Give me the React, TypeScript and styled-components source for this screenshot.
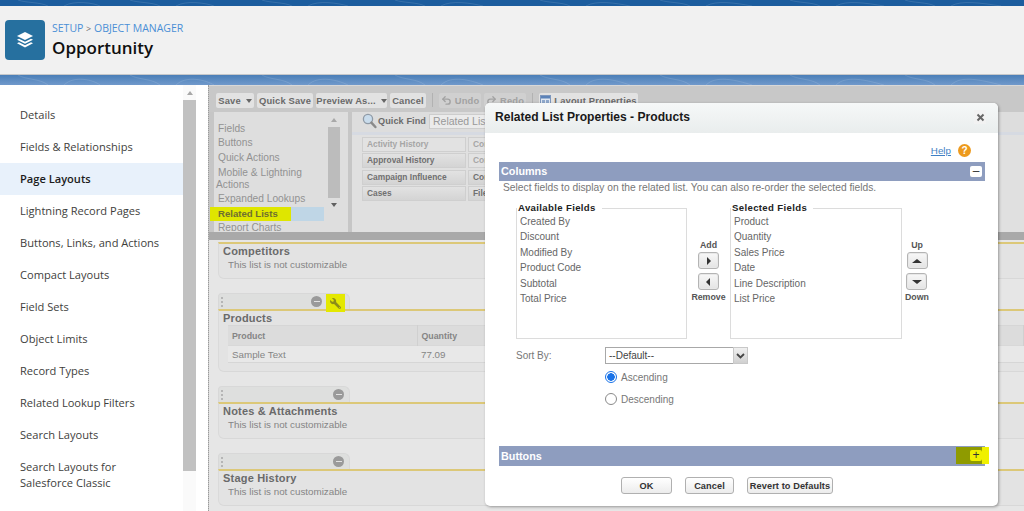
import React from "react";
import styled, { createGlobalStyle } from "styled-components";
import { Undo2, Redo2 } from "lucide-react";
import { FaWrench } from "react-icons/fa";

const GlobalStyle = createGlobalStyle`
  html, body {
    margin: 0;
    padding: 0;
    background: #fff;
  }
  * {
    box-sizing: border-box;
  }
`;

const classic = `"Liberation Sans", Arial, sans-serif`;

const Page = styled.div`
  position: relative;
  width: 1024px;
  height: 511px;
  overflow: hidden;
  display: flex;
  flex-direction: column;
  font-family: ${classic};
`;

const TopBand = styled.div`
  position: relative;
  height: 6px;
  flex: none;
  overflow: hidden;
  background: #1c5d9e;
`;

const Header = styled.header`
  height: 69px;
  flex: none;
  display: flex;
  align-items: center;
  gap: 7px;
  padding: 0 0 1px 5px;
  background: #f1f1f1;
  border-bottom: 1px solid #c6c8ca;
`;

const LogoBox = styled.div`
  width: 40px;
  height: 40px;
  border-radius: 4px;
  background: #26709f;
  display: flex;
  align-items: center;
  justify-content: center;
`;

const HeaderText = styled.div`
  margin-top: -2px;
`;

const Crumbs = styled.div`
  font-family: "Open Sans", sans-serif;
  font-size: 10.5px;
  line-height: 14px;
  color: #4a8fd6;
  margin: 2px 0 1px;

  span {
    color: #6d6d6d;
    font-size: 9px;
  }
`;

const PageTitle = styled.h1`
  margin: 0;
  font-family: "Open Sans", sans-serif;
  font-weight: 600;
  font-size: 17px;
  line-height: 21px;
  color: #0f0f0f;
`;

const Strip = styled.div`
  position: relative;
  height: 10px;
  flex: none;
  overflow: hidden;
  background: linear-gradient(#4b7fb8, #7099cb);
`;

const ContourSvg = styled.svg`
  position: absolute;
  left: 0;
  top: 0;
`;

const Main = styled.div`
  flex: 1;
  min-height: 0;
  display: flex;
  background: #fff;
`;

const Sidebar = styled.nav`
  width: 183px;
  flex: none;
  padding-top: 14px;
  overflow: hidden;
  font-family: "Open Sans", sans-serif;
`;

const NavItem = styled.div<{ $active?: boolean }>`
  padding: 8px 15px 8px 20px;
  min-height: 32px;
  font-size: 11.1px;
  line-height: 16px;
  color: ${({ $active }) => ($active ? "#1c1c1c" : "#3e3e3c")};
  font-weight: ${({ $active }) => ($active ? 600 : 400)};
  background: ${({ $active }) => ($active ? "#e8f1fb" : "transparent")};
`;

const SideScroll = styled.div`
  width: 13px;
  flex: none;
  margin-right: 12px;
  background: #fafafa;
  display: flex;
  flex-direction: column;
  align-items: center;
`;

const ScrollUp = styled.div`
  width: 0;
  height: 0;
  margin: 6px 0 5px;
  border-left: 3.5px solid transparent;
  border-right: 3.5px solid transparent;
  border-bottom: 4px solid #a8a8a8;
`;

const ScrollDown = styled.div`
  width: 0;
  height: 0;
  margin-top: 5px;
  border-left: 3.5px solid transparent;
  border-right: 3.5px solid transparent;
  border-top: 4px solid #606060;
`;

const SideThumb = styled.div`
  width: 13px;
  height: 371px;
  background: #c1c1c1;
`;

const Editor = styled.section`
  flex: 1;
  min-width: 0;
  display: flex;
  flex-direction: column;
  background: #c6c6c6;
  border-left: 1px dotted #9a9a9a;
`;

const Toolbar = styled.div`
  height: 27px;
  flex: none;
  display: flex;
  align-items: flex-start;
  gap: 3px;
  padding: 7px 0 0 7px;
  border-top: 1px solid #d8d8d8;
  background: #c8c8c8;
`;

const ToolButton = styled.div<{ $off?: boolean; $width: number }>`
  width: ${({ $width }) => $width}px;
  height: 15px;
  display: flex;
  align-items: center;
  justify-content: center;
  gap: 3px;
  border-radius: 2px;
  font-size: 9.4px;
  font-weight: 700;
  letter-spacing: 0.15px;
  white-space: nowrap;
  color: ${({ $off }) => ($off ? "#a2a2a2" : "#6a6a6a")};
  background: ${({ $off }) => ($off ? "#d0d0d0" : "#e2e2e2")};
`;

const Caret = styled.span`
  width: 0;
  height: 0;
  margin-left: 2px;
  border-left: 3px solid transparent;
  border-right: 3px solid transparent;
  border-top: 4px solid #666;
`;

const ToolSep = styled.span`
  width: 1px;
  height: 14px;
  margin: 0 3px;
  background: #b2b2b2;
`;

const Palette = styled.div`
  height: 120px;
  flex: none;
  display: flex;
  gap: 4px;
  padding-left: 5px;
`;

const PaletteNav = styled.div`
  width: 134px;
  flex: none;
  display: flex;
  background: #dedede;
`;

const PaletteList = styled.div`
  width: 110px;
  flex: none;
  padding-top: 10px;
`;

const PaletteItem = styled.div<{ $selected?: boolean; $cut?: boolean }>`
  padding-left: 4px;
  font-size: 10.2px;
  line-height: 14.4px;
  color: #929292;
  background: ${({ $selected }) => ($selected ? "#bfd6e6" : "transparent")};
  ${({ $cut }) => ($cut ? "height: 10px; overflow: hidden;" : "")}
`;

const WrappedLabel = styled.div`
  line-height: 11.5px;
  padding: 2px 0 2px;

  span {
    display: block;
    margin-left: -2px;
  }
`;

const Marked = styled.span`
  display: block;
  width: 81px;
  margin-left: -8px;
  padding-left: 8px;
  background: #dfe600;
  color: #6e6e30;
  font-size: 9.6px;
  font-weight: 700;
`;

const PaletteBar = styled.div`
  width: 13px;
  margin-left: 3px;
  display: flex;
  flex-direction: column;
  align-items: center;
`;

const PaletteThumb = styled.div`
  width: 12px;
  height: 71px;
  background: #bcbcbc;
`;

const PalettePanel = styled.div`
  flex: 1;
  min-width: 0;
  background: #e0e0e0;
`;

const QuickFind = styled.div`
  height: 23px;
  display: flex;
  align-items: center;
  gap: 1px;
  padding: 0 0 2px 10px;
  border-bottom: 3px solid #d6dae2;
  background: #dddddd;
  font-size: 9.1px;
  font-weight: 700;
  letter-spacing: 0.1px;
  color: #6a6a6a;
`;

const QuickInput = styled.div`
  width: 70px;
  height: 15px;
  margin-left: 2px;
  padding-left: 3px;
  border: 1px solid #cdcdcd;
  background: #ebebeb;
  font-weight: 400;
  font-size: 10.5px;
  line-height: 13px;
  letter-spacing: 0;
  white-space: nowrap;
  overflow: hidden;
  color: #999;
`;

const FieldGrid = styled.div`
  display: grid;
  grid-template-columns: repeat(2, 104px);
  grid-auto-rows: 15px;
  gap: 1.4px 2px;
  padding: 2px 0 0 10px;
`;

const FieldChip = styled.div<{ $used?: boolean }>`
  padding-left: 4px;
  font-size: 8.4px;
  font-weight: 700;
  line-height: 12px;
  border: 1px solid #cfcfcf;
  white-space: nowrap;
  overflow: hidden;
  color: ${({ $used }) => ($used ? "#a6a6a6" : "#707070")};
  background: ${({ $used }) =>
    $used ? "#e2e2e2" : "linear-gradient(#e2e2e2, #d4d4d4)"};
`;

const Divider = styled.div`
  height: 8px;
  flex: none;
  background: #a9a9a9;
`;

const Canvas = styled.div`
  flex: 1;
  min-height: 0;
  padding: 2px 0 0 9px;
  background: #e6e6e6;
  display: flex;
  flex-direction: column;
  gap: 14px;
`;

const Tab = styled.div<{ $inset: number }>`
  position: relative;
  width: 132px;
  height: 16px;
  display: flex;
  align-items: center;
  justify-content: flex-end;
  padding-right: ${({ $inset }) => $inset}px;
  border: 1px solid #d8d8d8;
  border-bottom: 0;
  border-radius: 4px 6px 0 0;
  background: #dedfde;

  &::before {
    content: "";
    position: absolute;
    left: 2px;
    top: 3px;
    height: 10px;
    border-left: 2px dotted #b5b5b5;
  }
`;

const MinusDot = styled.span`
  width: 11px;
  height: 11px;
  border-radius: 50%;
  background: #9a9a9a;
  display: flex;
  align-items: center;
  justify-content: center;

  &::after {
    content: "";
    width: 6px;
    height: 1.5px;
    background: #e2e2e2;
  }
`;

const WrenchMark = styled.span`
  position: absolute;
  left: 107px;
  top: 0;
  width: 19px;
  height: 18px;
  background: #e4e800;
  color: #8c8c1a;
  display: flex;
  align-items: center;
  justify-content: center;

  svg {
    transform: scaleX(-1);
  }
`;

const ListPanel = styled.div<{ $height: number }>`
  height: ${({ $height }) => $height}px;
  padding: 1px 0 0 4px;
  border-top: 2px solid #dcc878;
  border-left: 1px solid #dadada;
  border-bottom: 1px solid #d8d8d8;
  border-bottom-left-radius: 6px;
  background: #e3e3e3;
`;

const ListTitle = styled.div`
  font-size: 11px;
  line-height: 13px;
  font-weight: 700;
  letter-spacing: 0.2px;
  color: #6a6a6a;
`;

const ListNote = styled.div`
  padding-left: 5px;
  font-size: 9.8px;
  line-height: 13px;
  color: #858585;
`;

const PreviewTable = styled.table`
  margin: 0 0 0 5px;
  width: calc(100% - 5px);
  border-collapse: collapse;
  color: #858585;

  th {
    height: 20px;
    padding: 0 0 0 4px;
    text-align: left;
    font-size: 8.8px;
    font-weight: 700;
    background: #dcdcdc;
    border-top: 1px solid #d6d6d6;
    border-right: 1px solid #d0d0d0;
  }

  td {
    height: 17px;
    padding: 0 0 0 4px;
    font-size: 9.8px;
    background: #e8e8e8;
    border-top: 1px solid #d8d8d8;
    border-bottom: 1px solid #d6d6d6;
  }
`;

const ProductHead = styled.th`
  width: 189px;
`;

const Modal = styled.div`
  position: absolute;
  left: 485px;
  top: 103px;
  width: 513px;
  height: 403px;
  display: flex;
  flex-direction: column;
  border-radius: 5px;
  background: #fff;
  box-shadow: 1px 1px 3px rgba(0, 0, 0, 0.35);
`;

const ModalHead = styled.div`
  height: 30px;
  flex: none;
  display: flex;
  align-items: center;
  justify-content: space-between;
  padding: 0 12px 2px 10px;
  border-radius: 5px 5px 0 0;
  background: linear-gradient(#f6f8f8, #e9eded);
`;

const ModalTitle = styled.h2`
  margin: 0;
  font-size: 12.1px;
  font-weight: 700;
  color: #1a1a1a;
`;

const CloseBox = styled.span`
  width: 12px;
  height: 14px;
  display: flex;
  align-items: center;
  justify-content: center;
  background: #f2f2f2;
`;

const ModalBody = styled.div`
  flex: 1;
  display: flex;
  flex-direction: column;
  padding: 0 13px 0 14px;
`;

const HelpRow = styled.div`
  height: 29px;
  flex: none;
  display: flex;
  align-items: center;
  justify-content: flex-end;
  gap: 7px;
  padding: 5px 14px 0 0;
`;

const HelpLink = styled.a`
  font-size: 9.8px;
  color: #3f7fc4;
  text-decoration: underline;
`;

const HelpIcon = styled.span`
  width: 13px;
  height: 13px;
  border-radius: 50%;
  background: #ed9a1d;
  color: #fff;
  font-size: 10px;
  font-weight: 700;
  line-height: 13px;
  text-align: center;
`;

const SectionBar = styled.div`
  position: relative;
  height: 19px;
  flex: none;
  display: flex;
  align-items: center;
  justify-content: space-between;
  padding: 0 3px 1px 2px;
  background: #8e9dbf;
  color: #fff;
  font-size: 10.8px;
  font-weight: 700;
`;

const ToggleBox = styled.span`
  position: relative;
  width: 12px;
  height: 11px;
  display: flex;
  align-items: center;
  justify-content: center;
  border-radius: 2px;
  background: #fff;
  color: #333;
  font-size: 12px;
  font-weight: 400;
  line-height: 11px;
`;

const OliveMark = styled.span`
  position: absolute;
  right: -4px;
  top: 1px;
  width: 33px;
  height: 17px;
  background: linear-gradient(to right, #8f9b00 26px, #f0f000 26px);
`;

const YellowToggle = styled(ToggleBox)`
  background: #f0f000;
`;

const Intro = styled.p`
  margin: 0;
  height: 21px;
  padding: 0 0 0 4px;
  font-size: 10.25px;
  line-height: 14px;
  color: #777;
`;

const PickerRow = styled.div`
  display: flex;
  padding-left: 17px;
`;

const FieldBox = styled.fieldset<{ $width: number }>`
  width: ${({ $width }) => $width}px;
  height: 137px;
  flex: none;
  margin: 0;
  padding: 0 0 0 3px;
  border: 1px solid #dcdcdc;
`;

const BoxLegend = styled.legend`
  margin-left: -3px;
  padding: 0 6px 0 1px;
  font-size: 9.6px;
  line-height: 12px;
  font-weight: 700;
  letter-spacing: 0.35px;
  color: #222;
`;

const BoxItem = styled.div`
  font-size: 10px;
  line-height: 15.4px;
  color: #666;
`;

const Mover = styled.div<{ $width: number }>`
  width: ${({ $width }) => $width}px;
  flex: none;
  padding-top: 37px;
  display: flex;
  flex-direction: column;
  align-items: center;
  gap: 4px;
  font-size: 8.8px;
  line-height: 12px;
  font-weight: 700;
  color: #555;
`;

const MoverTop = styled.div`
  display: flex;
  flex-direction: column;
  align-items: center;
  gap: 1px;
`;

const MoverButton = styled.span`
  width: 21px;
  height: 17px;
  display: flex;
  align-items: center;
  justify-content: center;
  border: 1px solid #b4b4b4;
  border-radius: 3px;
  box-shadow: inset 0 0 0 1px #e8e8e8;
  background: linear-gradient(#f8f8f8, #e4e4e4);
`;

const Triangle = styled.span<{ $dir: "up" | "down" | "left" | "right" }>`
  width: 0;
  height: 0;
  ${({ $dir }) =>
    $dir === "up"
      ? "border-left: 5px solid transparent; border-right: 5px solid transparent; border-bottom: 4px solid #333;"
      : $dir === "down"
        ? "border-left: 5px solid transparent; border-right: 5px solid transparent; border-top: 4px solid #333;"
        : $dir === "left"
          ? "border-top: 4px solid transparent; border-bottom: 4px solid transparent; border-right: 4px solid #333;"
          : "border-top: 4px solid transparent; border-bottom: 4px solid transparent; border-left: 4px solid #333;"}
`;

const SortRow = styled.div`
  display: flex;
  align-items: center;
  height: 17px;
  margin-top: 8px;
  padding-left: 17px;
`;

const SortLabel = styled.span`
  width: 89px;
  font-size: 10px;
  color: #777;
`;

const SelectBox = styled.div`
  width: 128px;
  height: 17px;
  padding-left: 3px;
  border: 1px solid #a8a8a8;
  border-right: 0;
  font-size: 10px;
  line-height: 15px;
  color: #444;
`;

const SelectArrow = styled.div`
  width: 15px;
  height: 17px;
  display: flex;
  align-items: center;
  justify-content: center;
  border: 1px solid #c8c8c8;
  background: linear-gradient(#f0f0f0, #d0d0d0);
`;

const RadioGroup = styled.div`
  margin-top: 2px;
  padding-left: 106px;
`;

const RadioRow = styled.label`
  height: 22px;
  display: flex;
  align-items: center;
  gap: 4px;
  font-size: 10px;
  color: #777;
`;

const RadioDot = styled.span<{ $checked?: boolean }>`
  width: 12px;
  height: 12px;
  border-radius: 50%;
  border: 1px solid ${({ $checked }) => ($checked ? "#1a73e8" : "#8a8a8a")};
  background: ${({ $checked }) =>
    $checked ? "radial-gradient(circle, #1a73e8 3.5px, #fff 4px)" : "#fff"};
`;

const Footer = styled.div`
  display: flex;
  gap: 13px;
  margin-top: 11px;
  padding-left: 122px;
`;

const FootButton = styled.span<{ $width: number }>`
  width: ${({ $width }) => $width}px;
  height: 17px;
  display: flex;
  align-items: center;
  justify-content: center;
  border: 1px solid #b0b0b0;
  border-radius: 3px;
  background: linear-gradient(#ffffff, #ececec);
  font-size: 9.2px;
  font-weight: 700;
  letter-spacing: 0.1px;
  white-space: nowrap;
  color: #333;
`;

const ButtonsBar = styled(SectionBar)`
  height: 20px;
  margin-top: 36px;
`;

const navItems = [
  "Details",
  "Fields & Relationships",
  "Page Layouts",
  "Lightning Record Pages",
  "Buttons, Links, and Actions",
  "Compact Layouts",
  "Field Sets",
  "Object Limits",
  "Record Types",
  "Related Lookup Filters",
  "Search Layouts",
  "Search Layouts for Salesforce Classic",
  "Tabs",
];

const availableFields = [
  "Created By",
  "Discount",
  "Modified By",
  "Product Code",
  "Subtotal",
  "Total Price",
];

const selectedFields = [
  "Product",
  "Quantity",
  "Sales Price",
  "Date",
  "Line Description",
  "List Price",
];

const fieldChips = [
  { label: "Activity History", used: true },
  { label: "Contact Roles", used: true },
  { label: "Approval History" },
  { label: "Contracts", used: true },
  { label: "Campaign Influence" },
  { label: "Competitors" },
  { label: "Cases" },
  { label: "Files" },
];

const Contours = ({ width, height }: { width: number; height: number }) => (
  <ContourSvg width={width} height={height} viewBox={`0 0 1024 ${height}`} fill="none">
    {[18, 130, 262, 395, 540, 660, 790, 905].map((x, i) => (
      <path
        key={x}
        d={`M${x} 0c8 ${height / 2} 22 ${height / 3} 30 ${height}M${x + 46} ${height}c10 -${height} 30 -${height / 2} ${36 + i * 2} 0`}
        stroke="#ffffff"
        strokeOpacity="0.12"
        strokeWidth="1"
      />
    ))}
  </ContourSvg>
);

const LayersIcon = () => (
  <svg width="18" height="18" viewBox="0 0 18 18">
    <path fill="#fff" d="M9 1l8 4-8 4-8-4z" />
    <path fill="#fff" d="M3 7.7l6 3 6-3 2 1.1-8 4-8-4z" />
    <path fill="#fff" d="M3 11.2l6 3 6-3 2 1.1-8 4.2-8-4.2z" />
  </svg>
);

const MagnifierIcon = () => (
  <svg width="15" height="16" viewBox="0 0 15 16">
    <circle cx="6" cy="6" r="4.6" fill="#c9dcec" stroke="#8f9aa6" strokeWidth="1.3" />
    <path d="M9.4 9.6l4 4.4" stroke="#8a8a8a" strokeWidth="2.4" strokeLinecap="round" />
  </svg>
);

const LayoutIcon = () => (
  <svg width="11" height="11" viewBox="0 0 11 11">
    <rect x="0.5" y="0.5" width="10" height="10" fill="#dfe6f0" stroke="#7d97bd" />
    <rect x="1" y="1" width="9" height="2.5" fill="#5b82b8" />
    <rect x="2" y="5" width="3" height="4" fill="#8ea8cc" />
    <rect x="6" y="5" width="3" height="4" fill="#8ea8cc" />
  </svg>
);

const CloseIcon = () => (
  <svg width="9" height="9" viewBox="0 0 9 9">
    <path d="M1.5 1.5l6 6M7.5 1.5l-6 6" stroke="#666" strokeWidth="2" />
  </svg>
);

const SelectChevron = () => (
  <svg width="9" height="6" viewBox="0 0 9 6">
    <path d="M1 1l3.5 3.5L8 1" fill="none" stroke="#444" strokeWidth="1.8" />
  </svg>
);

export default function App() {
  return (
    <Page>
      <GlobalStyle />
      <TopBand>
        <Contours width={1024} height={6} />
      </TopBand>
      <Header>
        <LogoBox>
          <LayersIcon />
        </LogoBox>
        <HeaderText>
          <Crumbs>
            SETUP <span>&gt;</span> OBJECT MANAGER
          </Crumbs>
          <PageTitle>Opportunity</PageTitle>
        </HeaderText>
      </Header>
      <Strip>
        <Contours width={1024} height={10} />
      </Strip>
      <Main>
        <Sidebar>
          {navItems.map((item) => (
            <NavItem key={item} $active={item === "Page Layouts"}>
              {item}
            </NavItem>
          ))}
        </Sidebar>
        <SideScroll>
          <ScrollUp />
          <SideThumb />
        </SideScroll>
        <Editor>
          <Toolbar>
            <ToolButton $width={38}>
              Save <Caret />
            </ToolButton>
            <ToolButton $width={56}>Quick Save</ToolButton>
            <ToolButton $width={71}>
              Preview As... <Caret />
            </ToolButton>
            <ToolButton $width={36}>Cancel</ToolButton>
            <ToolSep />
            <ToolButton $off $width={42}>
              <Undo2 size={11} strokeWidth={3} /> Undo
            </ToolButton>
            <ToolButton $off $width={42}>
              <Redo2 size={11} strokeWidth={3} /> Redo
            </ToolButton>
            <ToolSep />
            <ToolButton $width={99}>
              <LayoutIcon /> Layout Properties
            </ToolButton>
          </Toolbar>
          <Palette>
            <PaletteNav>
              <PaletteList>
                <PaletteItem>Fields</PaletteItem>
                <PaletteItem>Buttons</PaletteItem>
                <PaletteItem>Quick Actions</PaletteItem>
                <PaletteItem>
                  <WrappedLabel>
                    Mobile &amp; Lightning
                    <span>Actions</span>
                  </WrappedLabel>
                </PaletteItem>
                <PaletteItem>Expanded Lookups</PaletteItem>
                <PaletteItem $selected>
                  <Marked>Related Lists</Marked>
                </PaletteItem>
                <PaletteItem $cut>Report Charts</PaletteItem>
              </PaletteList>
              <PaletteBar>
                <ScrollUp />
                <PaletteThumb />
                <ScrollDown />
              </PaletteBar>
            </PaletteNav>
            <PalettePanel>
              <QuickFind>
                <MagnifierIcon />
                Quick Find
                <QuickInput>Related List Name</QuickInput>
              </QuickFind>
              <FieldGrid>
                {fieldChips.map((chip) => (
                  <FieldChip key={chip.label} $used={chip.used}>
                    {chip.label}
                  </FieldChip>
                ))}
              </FieldGrid>
            </PalettePanel>
          </Palette>
          <Divider />
          <Canvas>
            <ListPanel $height={37}>
              <ListTitle>Competitors</ListTitle>
              <ListNote>This list is not customizable</ListNote>
            </ListPanel>
            <div>
              <Tab $inset={27}>
                <MinusDot />
                <WrenchMark>
                  <FaWrench size={11} />
                </WrenchMark>
              </Tab>
              <ListPanel $height={63}>
                <ListTitle>Products</ListTitle>
                <PreviewTable>
                  <thead>
                    <tr>
                      <ProductHead>Product</ProductHead>
                      <th>Quantity</th>
                    </tr>
                  </thead>
                  <tbody>
                    <tr>
                      <td>Sample Text</td>
                      <td>77.09</td>
                    </tr>
                  </tbody>
                </PreviewTable>
              </ListPanel>
            </div>
            <div>
              <Tab $inset={5}>
                <MinusDot />
              </Tab>
              <ListPanel $height={37}>
                <ListTitle>Notes &amp; Attachments</ListTitle>
                <ListNote>This list is not customizable</ListNote>
              </ListPanel>
            </div>
            <div>
              <Tab $inset={5}>
                <MinusDot />
              </Tab>
              <ListPanel $height={37}>
                <ListTitle>Stage History</ListTitle>
                <ListNote>This list is not customizable</ListNote>
              </ListPanel>
            </div>
          </Canvas>
        </Editor>
      </Main>
      <Modal>
        <ModalHead>
          <ModalTitle>Related List Properties - Products</ModalTitle>
          <CloseBox>
            <CloseIcon />
          </CloseBox>
        </ModalHead>
        <ModalBody>
          <HelpRow>
            <HelpLink>Help</HelpLink>
            <HelpIcon>?</HelpIcon>
          </HelpRow>
          <SectionBar>
            Columns
            <ToggleBox>–</ToggleBox>
          </SectionBar>
          <Intro>
            Select fields to display on the related list. You can also re-order the selected fields.
          </Intro>
          <PickerRow>
            <FieldBox $width={171}>
              <BoxLegend>Available Fields</BoxLegend>
              {availableFields.map((f) => (
                <BoxItem key={f}>{f}</BoxItem>
              ))}
            </FieldBox>
            <Mover $width={43}>
              <MoverTop>
                Add
                <MoverButton>
                  <Triangle $dir="right" />
                </MoverButton>
              </MoverTop>
              <MoverTop>
                <MoverButton>
                  <Triangle $dir="left" />
                </MoverButton>
                Remove
              </MoverTop>
            </Mover>
            <FieldBox $width={172}>
              <BoxLegend>Selected Fields</BoxLegend>
              {selectedFields.map((f) => (
                <BoxItem key={f}>{f}</BoxItem>
              ))}
            </FieldBox>
            <Mover $width={30}>
              <MoverTop>
                Up
                <MoverButton>
                  <Triangle $dir="up" />
                </MoverButton>
              </MoverTop>
              <MoverTop>
                <MoverButton>
                  <Triangle $dir="down" />
                </MoverButton>
                Down
              </MoverTop>
            </Mover>
          </PickerRow>
          <SortRow>
            <SortLabel>Sort By:</SortLabel>
            <SelectBox>--Default--</SelectBox>
            <SelectArrow>
              <SelectChevron />
            </SelectArrow>
          </SortRow>
          <RadioGroup>
            <RadioRow>
              <RadioDot $checked />
              Ascending
            </RadioRow>
            <RadioRow>
              <RadioDot />
              Descending
            </RadioRow>
          </RadioGroup>
          <ButtonsBar>
            Buttons
            <OliveMark />
            <YellowToggle>+</YellowToggle>
          </ButtonsBar>
          <Footer>
            <FootButton $width={51}>OK</FootButton>
            <FootButton $width={49}>Cancel</FootButton>
            <FootButton $width={86}>Revert to Defaults</FootButton>
          </Footer>
        </ModalBody>
      </Modal>
    </Page>
  );
}
